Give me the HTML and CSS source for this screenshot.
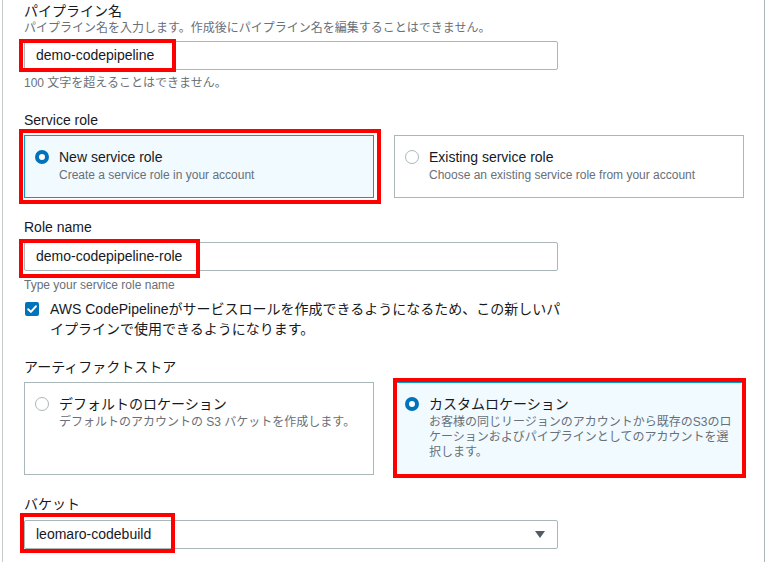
FILE: index.html
```html
<!DOCTYPE html>
<html lang="ja">
<head>
<meta charset="utf-8">
<title>Pipeline settings</title>
<link rel="stylesheet" href="styles.css">
</head>
<body>
<div class="panel">
  <div class="label first-label">パイプライン名</div>
  <div class="desc">パイプライン名を入力します。作成後にパイプライン名を編集することはできません。</div>
  <div class="input-wrap">
    <div class="input">demo-codepipeline</div>
    <span class="mark mark-name"></span>
  </div>
  <div class="hint hint-first">100 文字を超えることはできません。</div>

  <div class="label section">Service role</div>
  <div class="cards">
    <div class="card selected">
      <span class="radio on"></span>
      <div class="card-text">
        <div class="card-title">New service role</div>
        <div class="card-desc">Create a service role in your account</div>
      </div>
      <span class="mark mark-card1"></span>
    </div>
    <div class="card">
      <span class="radio"></span>
      <div class="card-text">
        <div class="card-title">Existing service role</div>
        <div class="card-desc">Choose an existing service role from your account</div>
      </div>
    </div>
  </div>

  <div class="label section">Role name</div>
  <div class="input-wrap">
    <div class="input">demo-codepipeline-role</div>
    <span class="mark mark-role"></span>
  </div>
  <div class="hint hint-role">Type your service role name</div>
  <div class="check-row">
    <span class="checkbox">
      <svg width="14" height="14" viewBox="0 0 14 14"><path d="M3.2 7.2 L5.9 9.9 L10.9 4.3" fill="none" stroke="#fff" stroke-width="2" stroke-linecap="round" stroke-linejoin="round"/></svg>
    </span>
    <span class="check-text">AWS CodePipelineがサービスロールを作成できるようになるため、この新しいパイプラインで使用できるようになります。</span>
  </div>

  <div class="label section-artifact">アーティファクトストア</div>
  <div class="cards">
    <div class="card">
      <span class="radio"></span>
      <div class="card-text">
        <div class="card-title">デフォルトのロケーション</div>
        <div class="card-desc">デフォルトのアカウントの S3 バケットを作成します。</div>
      </div>
    </div>
    <div class="card selected">
      <span class="radio on"></span>
      <div class="card-text">
        <div class="card-title">カスタムロケーション</div>
        <div class="card-desc">お客様の同じリージョンのアカウントから既存のS3のロケーションおよびパイプラインとしてのアカウントを選択します。</div>
      </div>
      <span class="mark mark-card4"></span>
    </div>
  </div>

  <div class="label section-bucket">バケット</div>
  <div class="input-wrap select-wrap">
    <div class="input select">
      <span>leomaro-codebuild</span>
      <svg class="caret" width="10" height="7" viewBox="0 0 10 7"><path d="M0 0 H10 L5 7 Z" fill="#545b64"/></svg>
    </div>
    <span class="mark mark-bucket"></span>
  </div>
</div>
</body>
</html>
```

FILE: styles.css
```css
* { box-sizing: border-box; }
html, body { margin: 0; padding: 0; background: #fff; }
body {
  font-family: "Liberation Sans", "Noto Sans CJK JP", sans-serif;
  color: #16191f;
  overflow: hidden;
}
.panel {
  margin-left: 2px;
  width: 763px;
  height: 562px;
  border-left: 1px solid #c5cbcc;
  border-right: 1px solid #aab7b8;
  padding: 0 0 0 21px;
}
.label {
  font-size: 14px;
  line-height: 20px;
}
.first-label { padding-top: 1px; }
.desc, .hint {
  font-size: 12px;
  line-height: 16px;
  color: #687078;
}
.desc { margin-top: -1px; }
.input-wrap {
  position: relative;
  width: 534px;
  margin-top: 5px;
}
.input {
  height: 29px;
  border: 1px solid #aab7b8;
  border-radius: 2px;
  padding: 0 11px;
  font-size: 14px;
  line-height: 27px;
  color: #16191f;
  background: #fff;
}
.hint-first { margin-top: 5px; }
.section { margin-top: 19px; }
.hint-role { margin-top: 6px; }
.cards {
  display: grid;
  grid-template-columns: 350px 350px;
  column-gap: 20px;
  margin-top: 5px;
}
.card {
  position: relative;
  display: flex;
  align-items: flex-start;
  gap: 10px;
  border: 1px solid #aab7b8;
  background: #fff;
  padding: 12px 10px 14px 10px;
}
.card.selected {
  border-color: #00a1c9;
  background: #f1faff;
}
.radio {
  flex: none;
  width: 14px;
  height: 14px;
  margin-top: 2px;
  border-radius: 50%;
  border: 1px solid #aab7b8;
  background: #fff;
}
.radio.on {
  border: 4px solid #0073bb;
}
.card-title {
  font-size: 14px;
  line-height: 18px;
}
.card-desc {
  margin-top: 2px;
  font-size: 12px;
  line-height: 15px;
  color: #687078;
}
.check-row {
  display: flex;
  align-items: flex-start;
  gap: 11px;
  width: 539px;
  margin-top: 6px;
}
.checkbox {
  flex: none;
  width: 14px;
  height: 14px;
  margin-top: 3px;
  margin-left: 1px;
  border-radius: 2px;
  background: #0073bb;
}
.checkbox svg { display: block; }
.check-text {
  font-size: 14px;
  line-height: 20px;
}
.section-artifact { margin-top: 18px; }
.section-bucket { margin-top: 19px; }
.select-wrap { margin-top: 6px; }
.select {
  display: flex;
  align-items: center;
  justify-content: space-between;
  padding-right: 12px;
}
.caret { display: block; }
.mark {
  position: absolute;
  border: 4px solid #ff0000;
  pointer-events: none;
}
.mark-name { left: -5px; top: -2px; width: 157px; height: 33px; }
.mark-role { left: -5px; top: -3px; width: 181px; height: 39px; }
.mark-bucket { left: -4px; top: -7px; width: 155px; height: 40px; }
.mark-card1 { left: -6px; top: -7px; width: 362px; height: 75px; }
.mark-card4 { left: -2px; top: -5px; width: 353px; height: 100px; }
```
